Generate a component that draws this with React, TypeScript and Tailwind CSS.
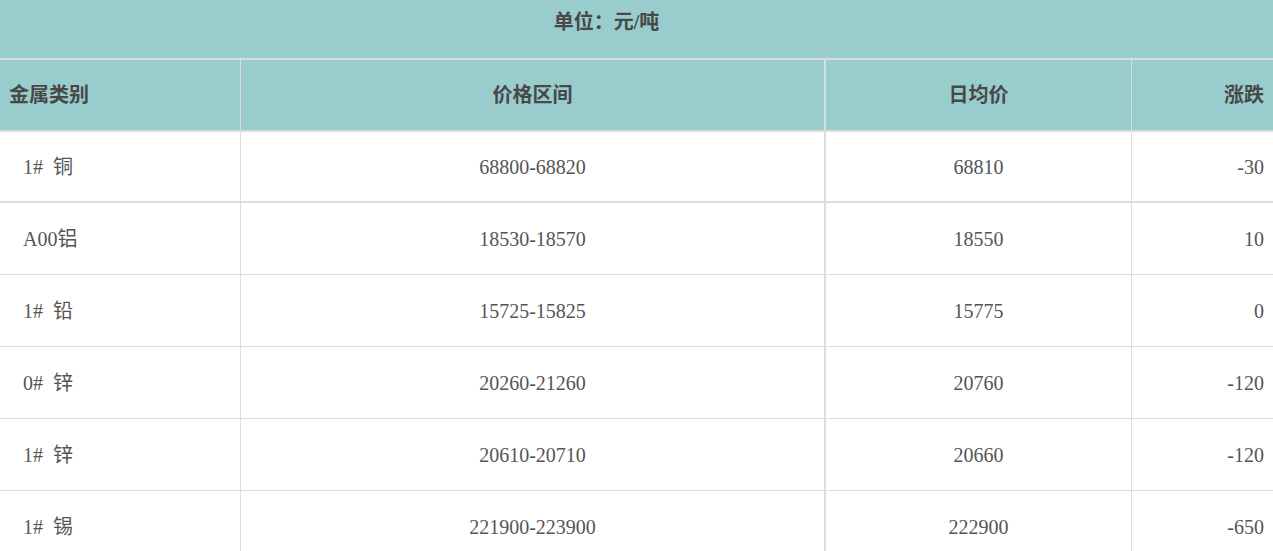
import React from "react";

type Row = {
  code: string;
  metal: string;
  range: string;
  avg: string;
  change: string;
};

const rows: Row[] = [
  { code: "1#", metal: "铜", range: "68800-68820", avg: "68810", change: "-30" },
  { code: "A00", metal: "铝", range: "18530-18570", avg: "18550", change: "10" },
  { code: "1#", metal: "铅", range: "15725-15825", avg: "15775", change: "0" },
  { code: "0#", metal: "锌", range: "20260-21260", avg: "20760", change: "-120" },
  { code: "1#", metal: "锌", range: "20610-20710", avg: "20660", change: "-120" },
  { code: "1#", metal: "锡", range: "221900-223900", avg: "222900", change: "-650" },
];

const font = { fontFamily: '"Liberation Serif", "Noto Sans CJK SC", serif' };

const App: React.FC = () => {
  return (
    <div className="w-[1273px] h-[551px] overflow-hidden bg-white" style={font}>
      <table className="w-full table-fixed border-separate border-spacing-0 text-[20px] leading-[20px]">
        <colgroup>
          <col className="w-[241px]" />
          <col className="w-[585px]" />
          <col className="w-[306px]" />
          <col />
        </colgroup>
        <thead>
          <tr>
            <th
              colSpan={4}
              className="h-[60px] bg-[#99cccc] border-b-2 border-[#dcdcdc] align-top pt-[12px] pr-[60px] text-center font-bold text-[#484848]"
            >
              单位：元/吨
            </th>
          </tr>
          <tr className="bg-[#99cccc] text-[#484848] font-bold">
            <th className="h-[72px] border-b-2 border-r border-[#dcdcdc] text-left pl-[9px]">金属类别</th>
            <th className="h-[72px] border-b-2 border-r-2 border-[#dcdcdc] text-center">价格区间</th>
            <th className="h-[72px] border-b-2 border-r border-[#dcdcdc] text-center">日均价</th>
            <th className="h-[72px] border-b-2 border-[#dcdcdc] text-right pr-[9px]">涨跌</th>
          </tr>
        </thead>
        <tbody className="text-[#555]">
          {rows.map((r, i) => {
            const b = i === 0 ? "border-b-2 h-[71px]" : "border-b h-[72px]";
            return (
              <tr key={i}>
                <td className={`${b} border-r border-[#dcdcdc] pl-[23px]`}>
                  {r.code}
                  {r.code.endsWith("#") ? <span className="ml-[10px]">{r.metal}</span> : r.metal}
                </td>
                <td className={`${b} border-r-2 border-[#dcdcdc] text-center`}>{r.range}</td>
                <td className={`${b} border-r border-[#dcdcdc] text-center`}>{r.avg}</td>
                <td className={`${b} border-[#dcdcdc] text-right pr-[9px]`}>{r.change}</td>
              </tr>
            );
          })}
        </tbody>
      </table>
    </div>
  );
};

export default App;
